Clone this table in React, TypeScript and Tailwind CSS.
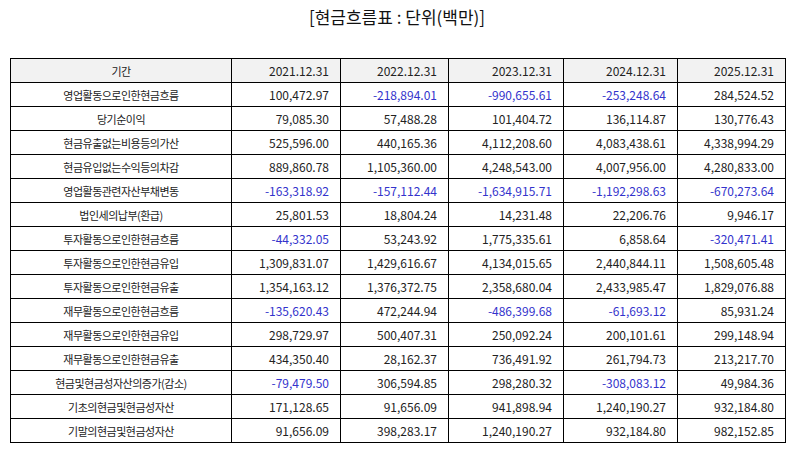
import React from "react";

const rows: [string, string[]][] = [
  ["영업활동으로인한현금흐름", ["100,472.97", "-218,894.01", "-990,655.61", "-253,248.64", "284,524.52"]],
  ["당기순이익", ["79,085.30", "57,488.28", "101,404.72", "136,114.87", "130,776.43"]],
  ["현금유출없는비용등의가산", ["525,596.00", "440,165.36", "4,112,208.60", "4,083,438.61", "4,338,994.29"]],
  ["현금유입없는수익등의차감", ["889,860.78", "1,105,360.00", "4,248,543.00", "4,007,956.00", "4,280,833.00"]],
  ["영업활동관련자산부채변동", ["-163,318.92", "-157,112.44", "-1,634,915.71", "-1,192,298.63", "-670,273.64"]],
  ["법인세의납부(환급)", ["25,801.53", "18,804.24", "14,231.48", "22,206.76", "9,946.17"]],
  ["투자활동으로인한현금흐름", ["-44,332.05", "53,243.92", "1,775,335.61", "6,858.64", "-320,471.41"]],
  ["투자활동으로인한현금유입", ["1,309,831.07", "1,429,616.67", "4,134,015.65", "2,440,844.11", "1,508,605.48"]],
  ["투자활동으로인한현금유출", ["1,354,163.12", "1,376,372.75", "2,358,680.04", "2,433,985.47", "1,829,076.88"]],
  ["재무활동으로인한현금흐름", ["-135,620.43", "472,244.94", "-486,399.68", "-61,693.12", "85,931.24"]],
  ["재무활동으로인한현금유입", ["298,729.97", "500,407.31", "250,092.24", "200,101.61", "299,148.94"]],
  ["재무활동으로인한현금유출", ["434,350.40", "28,162.37", "736,491.92", "261,794.73", "213,217.70"]],
  ["현금및현금성자산의증가(감소)", ["-79,479.50", "306,594.85", "298,280.32", "-308,083.12", "49,984.36"]],
  ["기초의현금및현금성자산", ["171,128.65", "91,656.09", "941,898.94", "1,240,190.27", "932,184.80"]],
  ["기말의현금및현금성자산", ["91,656.09", "398,283.17", "1,240,190.27", "932,184.80", "982,152.85"]],
];

const years = ["2021.12.31", "2022.12.31", "2023.12.31", "2024.12.31", "2025.12.31"];

export default function App() {
  return (
    <div
      className="w-[794px] h-[452px] bg-white text-[#222]"
      style={{ fontFamily: '"Noto Sans CJK KR", "Noto Sans", sans-serif' }}
    >
      <div className="h-[58px] pt-[5px] text-center text-[17px] leading-[24px] text-[#111]">
        [현금흐름표 : 단위(백만)]
      </div>
      <table className="ml-[10px] w-[775px] border-collapse table-fixed text-[12px] leading-[14px]">
        <colgroup>
          <col className="w-[221px]" />
          <col className="w-[109px]" />
          <col className="w-[108px]" />
          <col className="w-[115px]" />
          <col className="w-[114px]" />
          <col className="w-[108px]" />
        </colgroup>
        <thead>
          <tr className="h-[24px] bg-[#f2f2f2]">
            <th className="border border-black font-normal text-center text-[11px] tracking-[-0.5px] p-0">기간</th>
            {years.map((y) => (
              <th key={y} className="border border-black font-normal text-right pr-[11px] p-0">
                {y}
              </th>
            ))}
          </tr>
        </thead>
        <tbody>
          {rows.map(([label, vals]) => (
            <tr key={label} className="h-[24px]">
              <td className="border border-black text-center text-[11px] tracking-[-0.5px] p-0">{label}</td>
              {vals.map((v, i) => (
                <td
                  key={i}
                  className={
                    v.startsWith("-")
                      ? "border border-black text-right pr-[11px] p-0 text-[#3333cc]"
                      : "border border-black text-right pr-[11px] p-0"
                  }
                >
                  {v}
                </td>
              ))}
            </tr>
          ))}
        </tbody>
      </table>
    </div>
  );
}
